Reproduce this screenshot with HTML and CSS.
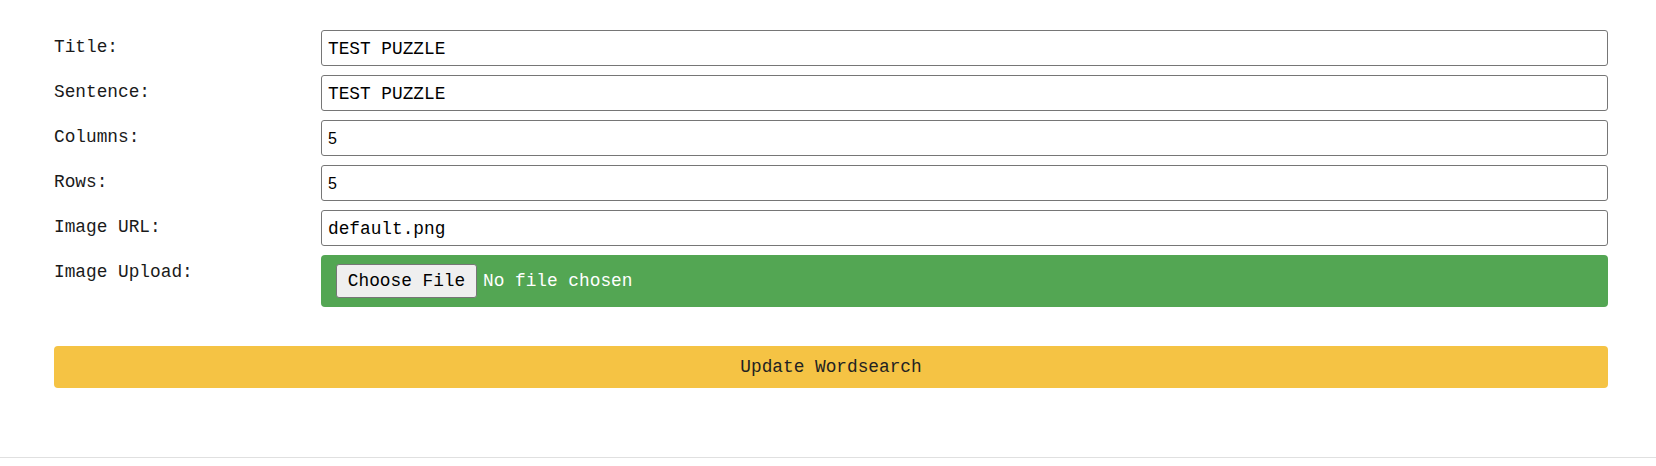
FILE: index.html
```html
<!DOCTYPE html>
<html lang="en">
<head>
<meta charset="utf-8">
<title>Edit Wordsearch</title>
<link rel="stylesheet" href="styles.css">
</head>
<body>
<div class="page">
  <form class="form">
    <label class="label" for="title">Title:</label>
    <input class="field" id="title" type="text" value="TEST PUZZLE">

    <label class="label" for="sentence">Sentence:</label>
    <input class="field" id="sentence" type="text" value="TEST PUZZLE">

    <label class="label" for="columns">Columns:</label>
    <input class="field field-num" id="columns" type="text" value="5">

    <label class="label" for="rows">Rows:</label>
    <input class="field field-num" id="rows" type="text" value="5">

    <label class="label" for="url">Image URL:</label>
    <input class="field" id="url" type="text" value="default.png">

    <label class="label">Image Upload:</label>
    <div class="upload">
      <button type="button" class="choose">Choose File</button>
      <span class="nofile">No file chosen</span>
    </div>
  </form>
  <button type="button" class="submit">Update Wordsearch</button>
</div>
<div class="rule"></div>
</body>
</html>
```

FILE: styles.css
```css
* { box-sizing: border-box; }

body {
  margin: 0;
  background: #ffffff;
  font-family: "Liberation Mono", monospace;
  font-size: 17.8px;
  color: #111;
}

.page {
  padding: 30px 48px 0 54px;
}

.form {
  display: grid;
  grid-template-columns: 267px 1fr;
  row-gap: 9px;
}

.label {
  padding-top: 7px;
  line-height: 20px;
  color: #1a1a1a;
}

.field {
  height: 36px;
  width: 100%;
  border: 1px solid #767676;
  border-radius: 3px;
  padding: 2px 6px 0;
  font-family: "Liberation Mono", monospace;
  font-size: 17.8px;
  color: #000;
  background: #fff;
}

.field-num {
  font-family: "Liberation Sans", Arial, sans-serif;
  font-size: 16px;
}

.upload {
  display: flex;
  align-items: center;
  gap: 6px;
  background: #53a653;
  border-radius: 4px;
  padding: 9px 15px;
  height: 52px;
}

.choose {
  height: 34px;
  width: 141px;
  padding: 0;
  background: #efefef;
  border: 1px solid #767676;
  border-radius: 3px;
  font-family: "Liberation Mono", monospace;
  font-size: 17.8px;
  color: #000;
}

.nofile {
  color: #ffffff;
  font-size: 17.8px;
}

.submit {
  display: block;
  width: 100%;
  margin-top: 39px;
  height: 42px;
  background: #f5c344;
  border: none;
  border-radius: 4px;
  font-family: "Liberation Mono", monospace;
  font-size: 17.8px;
  color: #222;
}

.rule {
  margin-top: 69px;
  height: 1px;
  background: #e0e0e0;
}
```
